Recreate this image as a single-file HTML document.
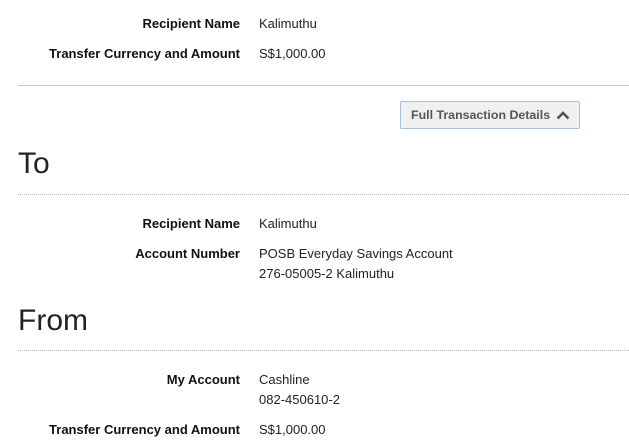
<!DOCTYPE html>
<html><head><meta charset="utf-8"><style>
body{margin:0;width:629px;height:444px;background:#fff;font-family:"Liberation Sans",sans-serif;color:#222;position:relative;overflow:hidden}
.l{position:absolute;right:389px;font-weight:bold;font-size:13px;line-height:16px;white-space:nowrap;color:#111}
.v{position:absolute;left:259px;font-size:13px;line-height:20px;white-space:nowrap;color:#222}
.h{position:absolute;left:18px;font-size:30px;line-height:34px;color:#222}
.sl{position:absolute;left:18px;right:0;border-top:1px solid #c8c8c8}
.dl{position:absolute;left:18px;right:0;border-top:1px dotted #b8b8b8}
.btn{position:absolute;left:400px;top:101px;width:178px;height:26px;border:1px solid #a9c1dd;border-radius:2px;background:#f0f0f0;font-size:12.4px;font-weight:bold;color:#555;line-height:26px}
</style></head><body>
<div class="l" style="top:16px">Recipient Name</div><div class="v" style="top:14px">Kalimuthu</div>
<div class="l" style="top:46px">Transfer Currency and Amount</div><div class="v" style="top:44px">S$1,000.00</div>
<div class="sl" style="top:85px"></div>
<div class="btn"><span style="position:absolute;left:10px">Full Transaction Details</span><svg style="position:absolute;left:155px;top:8px" width="14" height="10" viewBox="0 0 14 10"><path d="M1.5 8.5 L7 3 L12.5 8.5" fill="none" stroke="#555" stroke-width="2.6"/></svg></div>
<div class="h" style="top:147px">To</div>
<div class="dl" style="top:194px"></div>
<div class="l" style="top:216px">Recipient Name</div><div class="v" style="top:214px">Kalimuthu</div>
<div class="l" style="top:246px">Account Number</div><div class="v" style="top:244px">POSB Everyday Savings Account<br>276-05005-2 Kalimuthu</div>
<div class="h" style="top:304px">From</div>
<div class="dl" style="top:350px"></div>
<div class="l" style="top:372px">My Account</div><div class="v" style="top:370px">Cashline<br>082-450610-2</div>
<div class="l" style="top:422px">Transfer Currency and Amount</div><div class="v" style="top:420px">S$1,000.00</div>
</body></html>
